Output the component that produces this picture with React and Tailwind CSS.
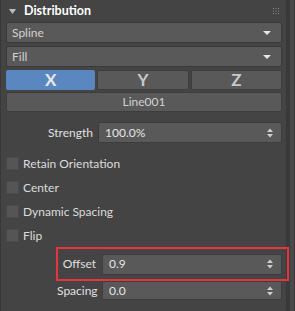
import React from "react";

const font = { fontFamily: 'Lato, "Noto Sans", sans-serif' };

function DownArrow() {
  return (
    <svg width="8" height="6" viewBox="0 0 8 6" className="shrink-0">
      <path d="M0 1 H8 L4 5 Z" fill="#e6e6e6" />
    </svg>
  );
}

function Spinner() {
  return (
    <svg width="6" height="10" viewBox="0 0 6 10" className="shrink-0">
      <path d="M3 0.5 L6 4 H0 Z" fill="#d0d0d0" />
      <path d="M0 6 H6 L3 9.5 Z" fill="#d0d0d0" />
    </svg>
  );
}

function Dropdown({ label }) {
  return (
    <div className="h-[21px] flex items-center justify-between rounded-[2px] border border-[#3a3a3a] bg-[#595959] pl-[5px] pr-[10px] text-[12px] text-[#d2d2d2]">
      <span>{label}</span>
      <DownArrow />
    </div>
  );
}

function Check({ label }) {
  return (
    <div className="h-[13px] flex items-center gap-[4px] text-[12px] text-[#dcdcdc]">
      <div className="w-[13px] h-[13px] bg-[#555555] border border-[#4a4a4a] shrink-0" />
      <span className="leading-none">{label}</span>
    </div>
  );
}

function NumField({ value, h = "h-[21px]" }) {
  return (
    <div className={`${h} flex-1 flex items-center justify-between bg-[#595959] border border-[#3d3d3d] rounded-[2px] pl-[6px] pr-[8px] text-[12px] text-[#e6e6e6]`}>
      <span>{value}</span>
      <Spinner />
    </div>
  );
}

export default function App() {
  return (
    <div className="w-[295px] h-[311px] bg-[#3a3a3a] flex overflow-hidden" style={font}>
      <div className="w-[287px] h-full bg-[#444444] border-l border-r border-[#383838] flex flex-col pl-[5px] pr-[4px]">
        <div className="h-[22px] flex items-center justify-between">
          <div className="flex items-center">
            <svg width="7" height="5" viewBox="0 0 7 5" className="ml-[3px] mr-[8px]">
              <path d="M0 0 H7 L3.5 5 Z" fill="#bdbdbd" />
            </svg>
            <span className="text-[12.5px] font-bold text-white">Distribution</span>
          </div>
          <svg width="6" height="6" viewBox="0 0 6 6" className="mr-[3px]">
            {[0, 2.5, 5].map((x) =>
              [0, 2.5, 5].map((y) => (
                <rect key={`${x}-${y}`} x={x} y={y} width="1" height="1" fill="#8a8a8a" />
              ))
            )}
          </svg>
        </div>
        <Dropdown label="Spline" />
        <div className="h-[3px]" />
        <Dropdown label="Fill" />
        <div className="h-[3px]" />
        <div className="flex gap-[2px] h-[20px]">
          <div className="flex-1 rounded-[2px] bg-[#5b87c0] flex items-center justify-center text-[17px] font-bold text-[#e8e8e8]">X</div>
          <div className="flex-1 rounded-[2px] bg-[#595959] border border-[#3d3d3d] flex items-center justify-center text-[17px] font-bold text-[#c8c8c8]">Y</div>
          <div className="flex-1 rounded-[2px] bg-[#595959] border border-[#3d3d3d] flex items-center justify-center text-[17px] font-bold text-[#c8c8c8]">Z</div>
        </div>
        <div className="h-[2px]" />
        <div className="h-[20px] rounded-[2px] bg-[#595959] border border-[#3d3d3d] flex items-center justify-center text-[12px] text-[#d2d2d2]">Line001</div>
        <div className="h-[10px]" />
        <div className="flex items-center">
          <div className="w-[92px] text-right pr-[5px] text-[12px] text-[#e0e0e0]">Strength</div>
          <NumField value="100.0%" />
        </div>
        <div className="h-[14px]" />
        <div className="flex flex-col gap-[11px]">
          <Check label="Retain Orientation" />
          <Check label="Center" />
          <Check label="Dynamic Spacing" />
          <Check label="Flip" />
        </div>
        <div className="h-[5px]" />
        <div className="ml-[50px] mr-[-7px] h-[34px] border-2 border-[#e8343c] flex items-center pl-[4px] pr-[5px]">
          <div className="w-[40px] text-right pr-[6px] text-[12px] text-[#e0e0e0]">Offset</div>
          <NumField value="0.9" />
        </div>
        <div className="flex items-center ml-[50px] pl-[1px]">
          <div className="w-[45px] text-right pr-[7px] text-[12px] text-[#e0e0e0]">Spacing</div>
          <NumField value="0.0" h="h-[19px]" />
        </div>
      </div>
      <div className="flex-1 flex justify-center">
        <div className="w-[4px] h-full bg-[#4a4a4a] ml-[1px]" />
      </div>
    </div>
  );
}
